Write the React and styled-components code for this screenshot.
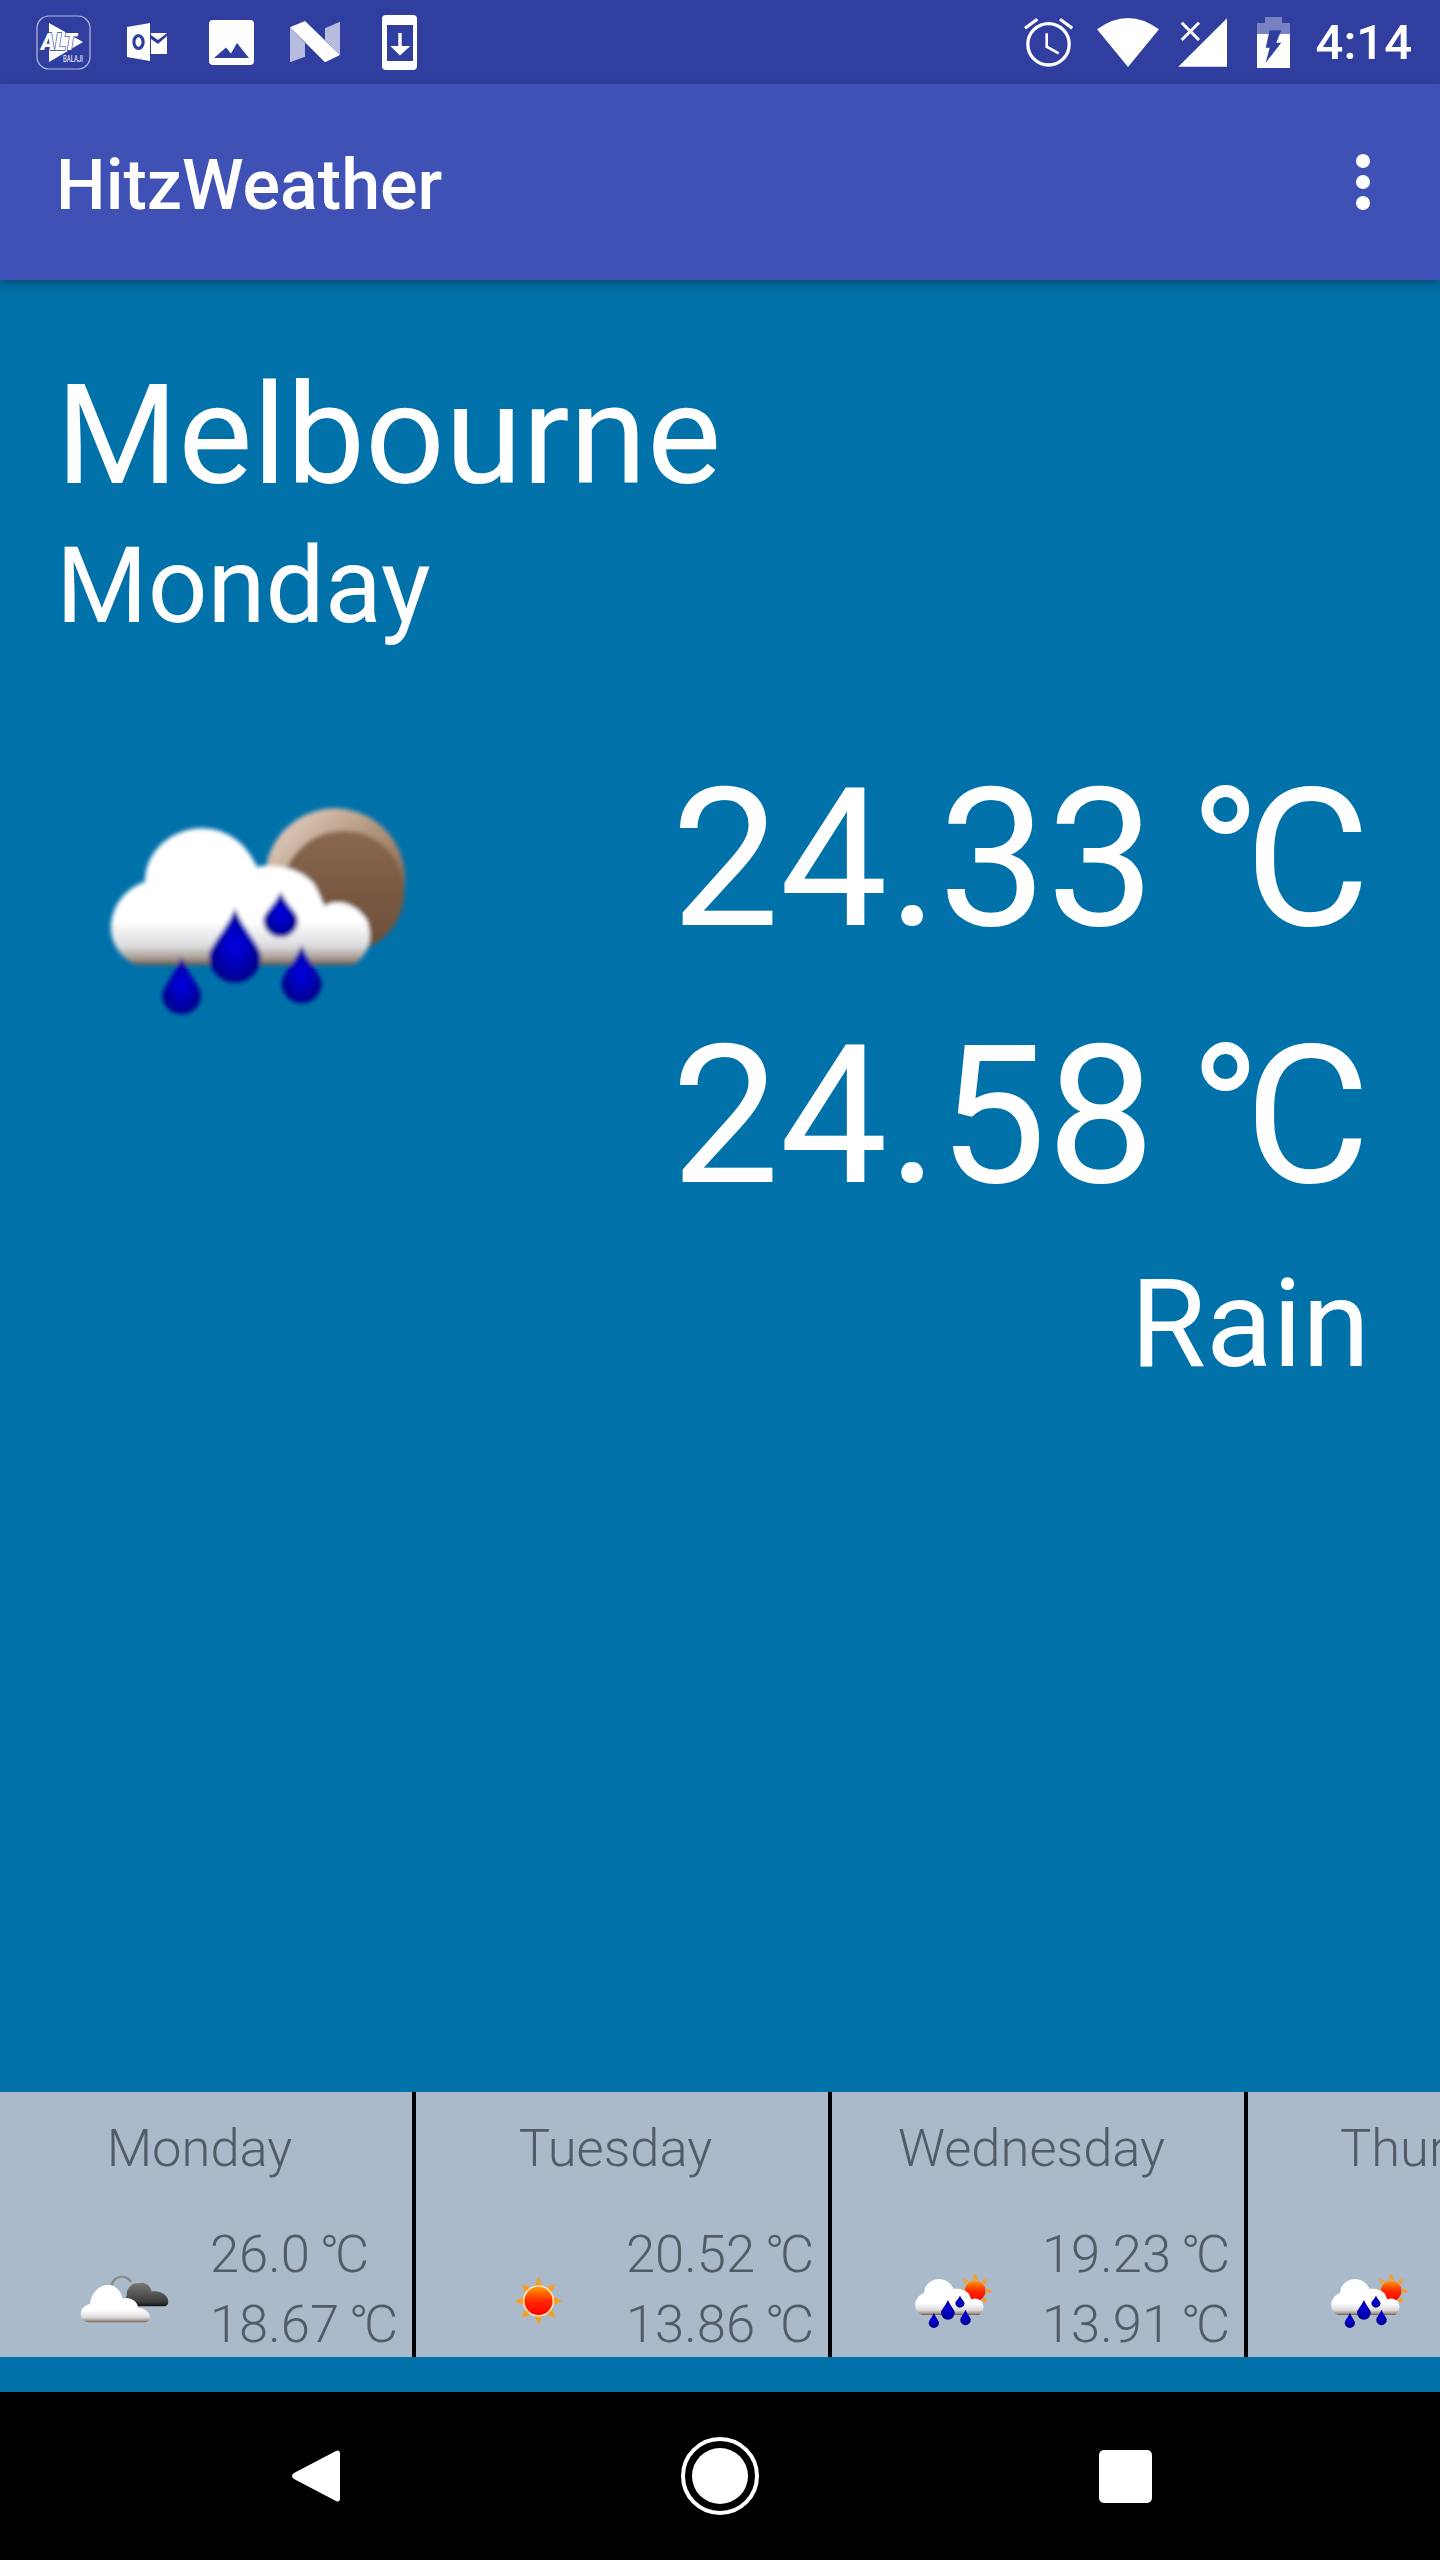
import React from 'react'
import styled, { createGlobalStyle } from 'styled-components'

const Global = createGlobalStyle`
  html, body { margin: 0; padding: 0; background: #000; }
  body { font-family: Roboto, "Noto Sans", sans-serif; }
`

const Screen = styled.div`
  width: 1440px;
  height: 2560px;
  display: flex;
  flex-direction: column;
  overflow: hidden;
  color: #fff;
`

const StatusBar = styled.div`
  height: 84px;
  flex: none;
  background: #303f9f;
  display: flex;
  justify-content: space-between;
  padding: 0 28px 0 21px;
`
const IconGroup = styled.div`
  display: flex;
  align-items: center;
`
const Slot = styled.div`
  width: ${({ $w }) => $w || 84}px;
  height: 84px;
  display: flex;
  align-items: center;
  justify-content: center;
`
const Clock = styled.div`
  font-size: 49px;
  font-weight: 500;
  line-height: 84px;
  padding: 2px 0 0 9px;
`

const AppBar = styled.div`
  height: 196px;
  flex: none;
  background: #3f51b5;
  display: flex;
  align-items: center;
  justify-content: space-between;
  padding: 0 70px 0 56px;
  box-shadow: 0 4px 10px rgba(0, 0, 0, 0.32);
  position: relative;
`
const Title = styled.div`
  font-size: 70px;
  font-weight: 500;
  padding-top: 6px;
`
const Overflow = styled.div`
  display: flex;
  flex-direction: column;
  gap: 7px;
`
const Dot = styled.span`
  width: 14px;
  height: 14px;
  border-radius: 50%;
  background: #fff;
`

const Main = styled.div`
  flex: 1;
  background: #0171aa;
  display: flex;
  flex-direction: column;
`
const Current = styled.div`
  flex: 1;
  padding: 73px 70px 0 56px;
`
const City = styled.div`
  font-size: 140px;
  line-height: 164px;
`
const Today = styled.div`
  font-size: 105px;
  line-height: 124px;
  margin-top: 8px;
`
const Hero = styled.div`
  display: flex;
  justify-content: space-between;
  margin-top: 82px;
`
const HeroIcon = styled.div`
  margin: 49px 0 0 24px;
`
const Readings = styled.div`
  text-align: right;
`
const Temp = styled.div`
  font-size: 192.5px;
  line-height: 257px;
  word-spacing: -0.07em;
`
const Condition = styled.div`
  font-size: 122.5px;
  line-height: 140px;
  margin-top: 9px;
  text-align: right;
`
const Degree = styled.span`
  letter-spacing: -0.085em;
`

const Strip = styled.div`
  height: 265px;
  flex: none;
  margin-bottom: 35px;
  background: #aabacb;
  display: flex;
  overflow: hidden;
`
const DayCard = styled.div`
  flex: none;
  width: 416px;
  box-sizing: border-box;
  border-right: 4px solid #000;
  padding-top: 25px;
  color: #515c66;
  font-size: 52.5px;
  font-weight: 300;
  line-height: 62px;
`
const DayName = styled.div`
  width: 399px;
  text-align: center;
`
const DayRow = styled.div`
  display: flex;
  align-items: flex-end;
  margin-top: 40px;
  padding-left: 75px;
`
const DayIcon = styled.div`
  width: 95px;
  height: 69px;
  margin-bottom: 24px;
  flex: none;
`
const DayTemps = styled.div`
  margin-left: 40px;
  min-height: 140px;
  white-space: nowrap;
  line-height: 70px;
  word-spacing: -0.06em;
`

const NavBar = styled.div`
  height: 168px;
  flex: none;
  background: #000;
  display: flex;
  padding: 0 112px;
`
const NavSlot = styled.div`
  width: 405px;
  display: flex;
  align-items: center;
  justify-content: center;
`
const HomeRing = styled.div`
  width: 78px;
  height: 78px;
  box-sizing: border-box;
  border: 4px solid #fff;
  border-radius: 50%;
  display: flex;
  align-items: center;
  justify-content: center;
`
const HomeDot = styled.div`
  width: 56px;
  height: 56px;
  border-radius: 50%;
  background: #fff;
`
const Recents = styled.div`
  width: 53px;
  height: 53px;
  margin-left: 2px;
  border-radius: 5px;
  background: #fff;
`

const BAR = '#303f9f'

const AltIcon = () => (
  <svg width="55" height="55" viewBox="0 0 55 55">
    <rect x="1" y="1" width="53" height="53" rx="12" fill="none" stroke="#fff" strokeOpacity="0.65" strokeWidth="1.2" />
    <path d="M13 8 L47 27 L13 47 Z" fill="#fff" />
    <text x="5" y="35" fontFamily="Roboto" fontStyle="italic" fontWeight="900" fontSize="23" fill="#fff" stroke={BAR} strokeWidth="1.4" paintOrder="stroke" textLength="36" lengthAdjust="spacingAndGlyphs">ALT</text>
    <text x="27" y="47" fontFamily="Roboto" fontWeight="400" fontSize="9" fill="#fff" textLength="20" lengthAdjust="spacingAndGlyphs">BALAJI</text>
  </svg>
)

const OutlookIcon = () => (
  <svg width="41" height="38" viewBox="0 0 41 38">
    <path d="M0 4 L23 0 V38 L0 34 Z" fill="#fff" />
    <ellipse cx="11.5" cy="19" rx="4.6" ry="6.4" fill="none" stroke={BAR} strokeWidth="3.2" />
    <path d="M24 16 L31 21 L40 13 V31 H24 Z" fill="#fff" />
    <path d="M24 10 H40 L31 17 L24 12 Z" fill="#fff" />
  </svg>
)

const PhotoIcon = () => (
  <svg width="45" height="45" viewBox="0 0 45 45">
    <rect width="45" height="45" rx="4" fill="#fff" />
    <path d="M5 38 L17 27.5 L22 33.5 L28 23 L40 38 Z" fill={BAR} />
  </svg>
)

const NougatIcon = () => (
  <svg width="50" height="42" viewBox="0 0 50 42">
    <path d="M0 6.3 L15 22 V35.7 L0 41.3 Z" fill="#fff" fillOpacity="0.65" />
    <path d="M35 7.3 L50 0.7 V34 L35 19 Z" fill="#fff" fillOpacity="0.65" />
    <path d="M0 6.3 L15 0 L50 34 L35 41.3 Z" fill="#fff" />
  </svg>
)

const DownloadIcon = () => (
  <svg width="35" height="55" viewBox="0 0 35 55">
    <rect width="35" height="55" rx="4" fill="#fff" />
    <rect x="5" y="10" width="26" height="36" fill={BAR} />
    <path d="M16.3 18 H19.7 V31 H28.3 L18 40.5 L8.3 31 H16.3 Z" fill="#fff" />
  </svg>
)

const AlarmIcon = () => (
  <svg width="49" height="49" viewBox="0 0 49 49" fill="none" stroke="#fff">
    <circle cx="24.5" cy="26.3" r="20.7" strokeWidth="3.3" />
    <path d="M22.7 15.3 V28.7 L34.7 35.3" strokeWidth="2.6" />
    <path d="M1 10.3 L13.3 1.3 M36 1.3 L48.3 10.3" strokeWidth="3.2" />
  </svg>
)

const WifiIcon = () => (
  <svg width="62" height="49" viewBox="0 0 62 49">
    <path d="M0 11.3 Q31 -11.3 62 11.3 L31 49 Z" fill="#fff" />
  </svg>
)

const SignalIcon = () => (
  <svg width="49" height="49" viewBox="0 0 49 49">
    <path d="M0.3 48.7 H49 V0.3 Z" fill="#fff" />
    <path d="M3.7 4.7 L21 22 M21 4.7 L3.7 22" stroke="#fff" strokeWidth="3" />
  </svg>
)

const BatteryIcon = () => (
  <svg width="33" height="51" viewBox="0 0 33 51">
    <path d="M8 0 H25 V6 H33 V17 H0 V6 H8 Z" fill="#fff" fillOpacity="0.35" />
    <path d="M0 17 H33 V51 H0 Z" fill="#fff" />
    <path d="M12.7 13.3 H24.3 L19.3 25.7 H24.3 L8.7 45.7 L12.7 30.7 H8.7 Z" fill={BAR} />
  </svg>
)

const BackIcon = () => (
  <svg width="50" height="56" viewBox="0 0 50 56">
    <path d="M46 3 L4 25 Q0 28 4 31 L46 53 Q50 55 50 50 V6 Q50 1 46 3 Z" fill="#fff" />
  </svg>
)

const IconDefs = ({ blur }) => (
  <defs>
    <linearGradient id="cloudFill" x1="0" y1="0" x2="0" y2="1">
      <stop offset="0" stopColor="#fff" />
      <stop offset="0.68" stopColor="#fff" />
      <stop offset="0.86" stopColor="#dcdce0" />
      <stop offset="0.95" stopColor="#a89c92" />
      <stop offset="1" stopColor="#6d5a4a" />
    </linearGradient>
    <linearGradient id="moonRim" x1="0" y1="0" x2="1" y2="1">
      <stop offset="0" stopColor="#ead9cc" />
      <stop offset="0.55" stopColor="#a98970" />
      <stop offset="1" stopColor="#6b4c36" />
    </linearGradient>
    <linearGradient id="moonFill" x1="0" y1="0" x2="0" y2="1">
      <stop offset="0" stopColor="#8a6850" />
      <stop offset="1" stopColor="#6b4c36" />
    </linearGradient>
    <linearGradient id="sunFill" x1="0" y1="0" x2="0" y2="1">
      <stop offset="0" stopColor="#ff9c00" />
      <stop offset="0.5" stopColor="#ff2a00" />
      <stop offset="1" stopColor="#f00" />
    </linearGradient>
    <linearGradient id="darkFill" x1="0" y1="0" x2="0" y2="1">
      <stop offset="0" stopColor="#777" />
      <stop offset="0.8" stopColor="#3d3d3d" />
      <stop offset="1" stopColor="#111" />
    </linearGradient>
    <radialGradient id="dropFill">
      <stop offset="0" stopColor="#0000e6" />
      <stop offset="1" stopColor="#00008c" />
    </radialGradient>
    {blur && (
      <filter id="soft" x="-5%" y="-5%" width="110%" height="110%">
        <feGaussianBlur stdDeviation="6" />
      </filter>
    )}
  </defs>
)

const Drop = ({ x, tip, y, r }) => (
  <path
    d={`M${x} ${tip} C${x + r * 0.4} ${tip + (y - tip) * 0.5} ${x + r} ${y - r * 0.4} ${x + r} ${y} A${r} ${r} 0 1 1 ${x - r} ${y} C${x - r} ${y - r * 0.4} ${x - r * 0.4} ${tip + (y - tip) * 0.5} ${x} ${tip} Z`}
    fill="url(#dropFill)"
  />
)

const CLOUD = 'M170 555 C110 530 85 470 95 420 C105 360 150 320 195 305 C195 210 280 145 365 145 C440 145 500 190 530 260 C590 250 660 265 700 310 C720 340 725 370 735 378 C770 355 830 370 860 420 C880 470 870 520 820 555 Z'

const Rays = ({ cx, cy, inner, outer, count = 8 }) => (
  <g fill="#fb9d1e">
    {Array.from({ length: count }, (_, i) => {
      const a = (i * 2 * Math.PI) / count
      const s = Math.PI / count
      const p = (ang, rad) => `${cx + Math.cos(ang) * rad} ${cy + Math.sin(ang) * rad}`
      return <path key={i} d={`M${p(a, outer)} L${p(a + s * 0.6, inner)} L${p(a - s * 0.6, inner)} Z`} />
    })}
  </g>
)

const SmallSvg = ({ children }) => (
  <svg width="95" height="69" viewBox="0 0 1080 780">
    <IconDefs />
    {children}
  </svg>
)

const RainDrops = () => (
  <>
    <Drop x={465} tip={385} y={530} r={78} />
    <Drop x={305} tip={530} y={645} r={58} />
    <Drop x={665} tip={495} y={610} r={60} />
    <Drop x={602} tip={335} y={420} r={52} />
  </>
)

const MoonRainIcon = () => (
  <svg width="360" height="260" viewBox="0 0 1080 780">
    <IconDefs blur />
    <g filter="url(#soft)">
      <circle cx="765" cy="295" r="210" fill="url(#moonRim)" />
      <circle cx="790" cy="335" r="183" fill="url(#moonFill)" />
      <path d={CLOUD} fill="url(#cloudFill)" />
      <RainDrops />
    </g>
  </svg>
)

const SunRainIcon = () => (
  <SmallSvg>
    <Rays cx={775} cy={281} inner={135} outer={197} />
    <circle cx="775" cy="281" r="118" fill="url(#sunFill)" />
    <path d={CLOUD} fill="url(#cloudFill)" />
    <RainDrops />
  </SmallSvg>
)

const SunIcon = () => (
  <SmallSvg>
    <Rays cx={540} cy={395} inner={180} outer={272} />
    <circle cx="540" cy="395" r="178" fill="#ffe9c4" />
    <circle cx="540" cy="395" r="160" fill="url(#sunFill)" />
  </SmallSvg>
)

const CloudsIcon = () => (
  <SmallSvg>
    <path d="M430 300 A110 110 0 0 1 640 180" fill="none" stroke="#8b8b8b" strokeWidth="26" />
    <path d="M640 456 C570 450 560 380 590 330 C580 250 650 180 730 195 C790 170 860 220 870 290 C960 270 1060 330 1060 400 C1060 440 1040 456 1000 456 Z" fill="url(#darkFill)" />
    <path d="M150 638 C90 630 55 580 68 520 C80 470 120 440 170 430 C180 300 290 200 390 215 C480 225 530 300 540 370 C620 340 710 400 720 470 C790 480 860 530 855 590 C850 625 820 638 780 638 Z" fill="url(#cloudFill)" />
  </SmallSvg>
)

const Celsius = ({ value }) => <>{value} <Degree>°</Degree>C</>

const forecast = [
  { day: 'Monday', Icon: CloudsIcon, temps: ['26.0', '18.67'] },
  { day: 'Tuesday', Icon: SunIcon, temps: ['20.52', '13.86'] },
  { day: 'Wednesday', Icon: SunRainIcon, temps: ['19.23', '13.91'] },
  { day: 'Thursday', Icon: SunRainIcon, temps: [] },
]

const Forecast = ({ day, Icon, temps }) => (
  <DayCard>
    <DayName>{day}</DayName>
    <DayRow>
      <DayIcon><Icon /></DayIcon>
      <DayTemps>
        {temps.map(t => <div key={t}><Celsius value={t} /></div>)}
      </DayTemps>
    </DayRow>
  </DayCard>
)

export default () => (
  <Screen>
    <Global />
    <StatusBar>
      <IconGroup>
        <Slot><AltIcon /></Slot>
        <Slot><OutlookIcon /></Slot>
        <Slot><PhotoIcon /></Slot>
        <Slot><NougatIcon /></Slot>
        <Slot><DownloadIcon /></Slot>
      </IconGroup>
      <IconGroup>
        <Slot $w={84}><AlarmIcon /></Slot>
        <Slot $w={74}><WifiIcon /></Slot>
        <Slot $w={76}><SignalIcon /></Slot>
        <Slot $w={66}><BatteryIcon /></Slot>
        <Clock>4:14</Clock>
      </IconGroup>
    </StatusBar>
    <AppBar>
      <Title>HitzWeather</Title>
      <Overflow><Dot /><Dot /><Dot /></Overflow>
    </AppBar>
    <Main>
      <Current>
        <City>Melbourne</City>
        <Today>Monday</Today>
        <Hero>
          <HeroIcon><MoonRainIcon /></HeroIcon>
          <Readings>
            <Temp><Celsius value="24.33" /></Temp>
            <Temp><Celsius value="24.58" /></Temp>
          </Readings>
        </Hero>
        <Condition>Rain</Condition>
      </Current>
      <Strip>
        {forecast.map(f => <Forecast key={f.day} {...f} />)}
      </Strip>
    </Main>
    <NavBar>
      <NavSlot><BackIcon /></NavSlot>
      <NavSlot><HomeRing><HomeDot /></HomeRing></NavSlot>
      <NavSlot><Recents /></NavSlot>
    </NavBar>
  </Screen>
)
